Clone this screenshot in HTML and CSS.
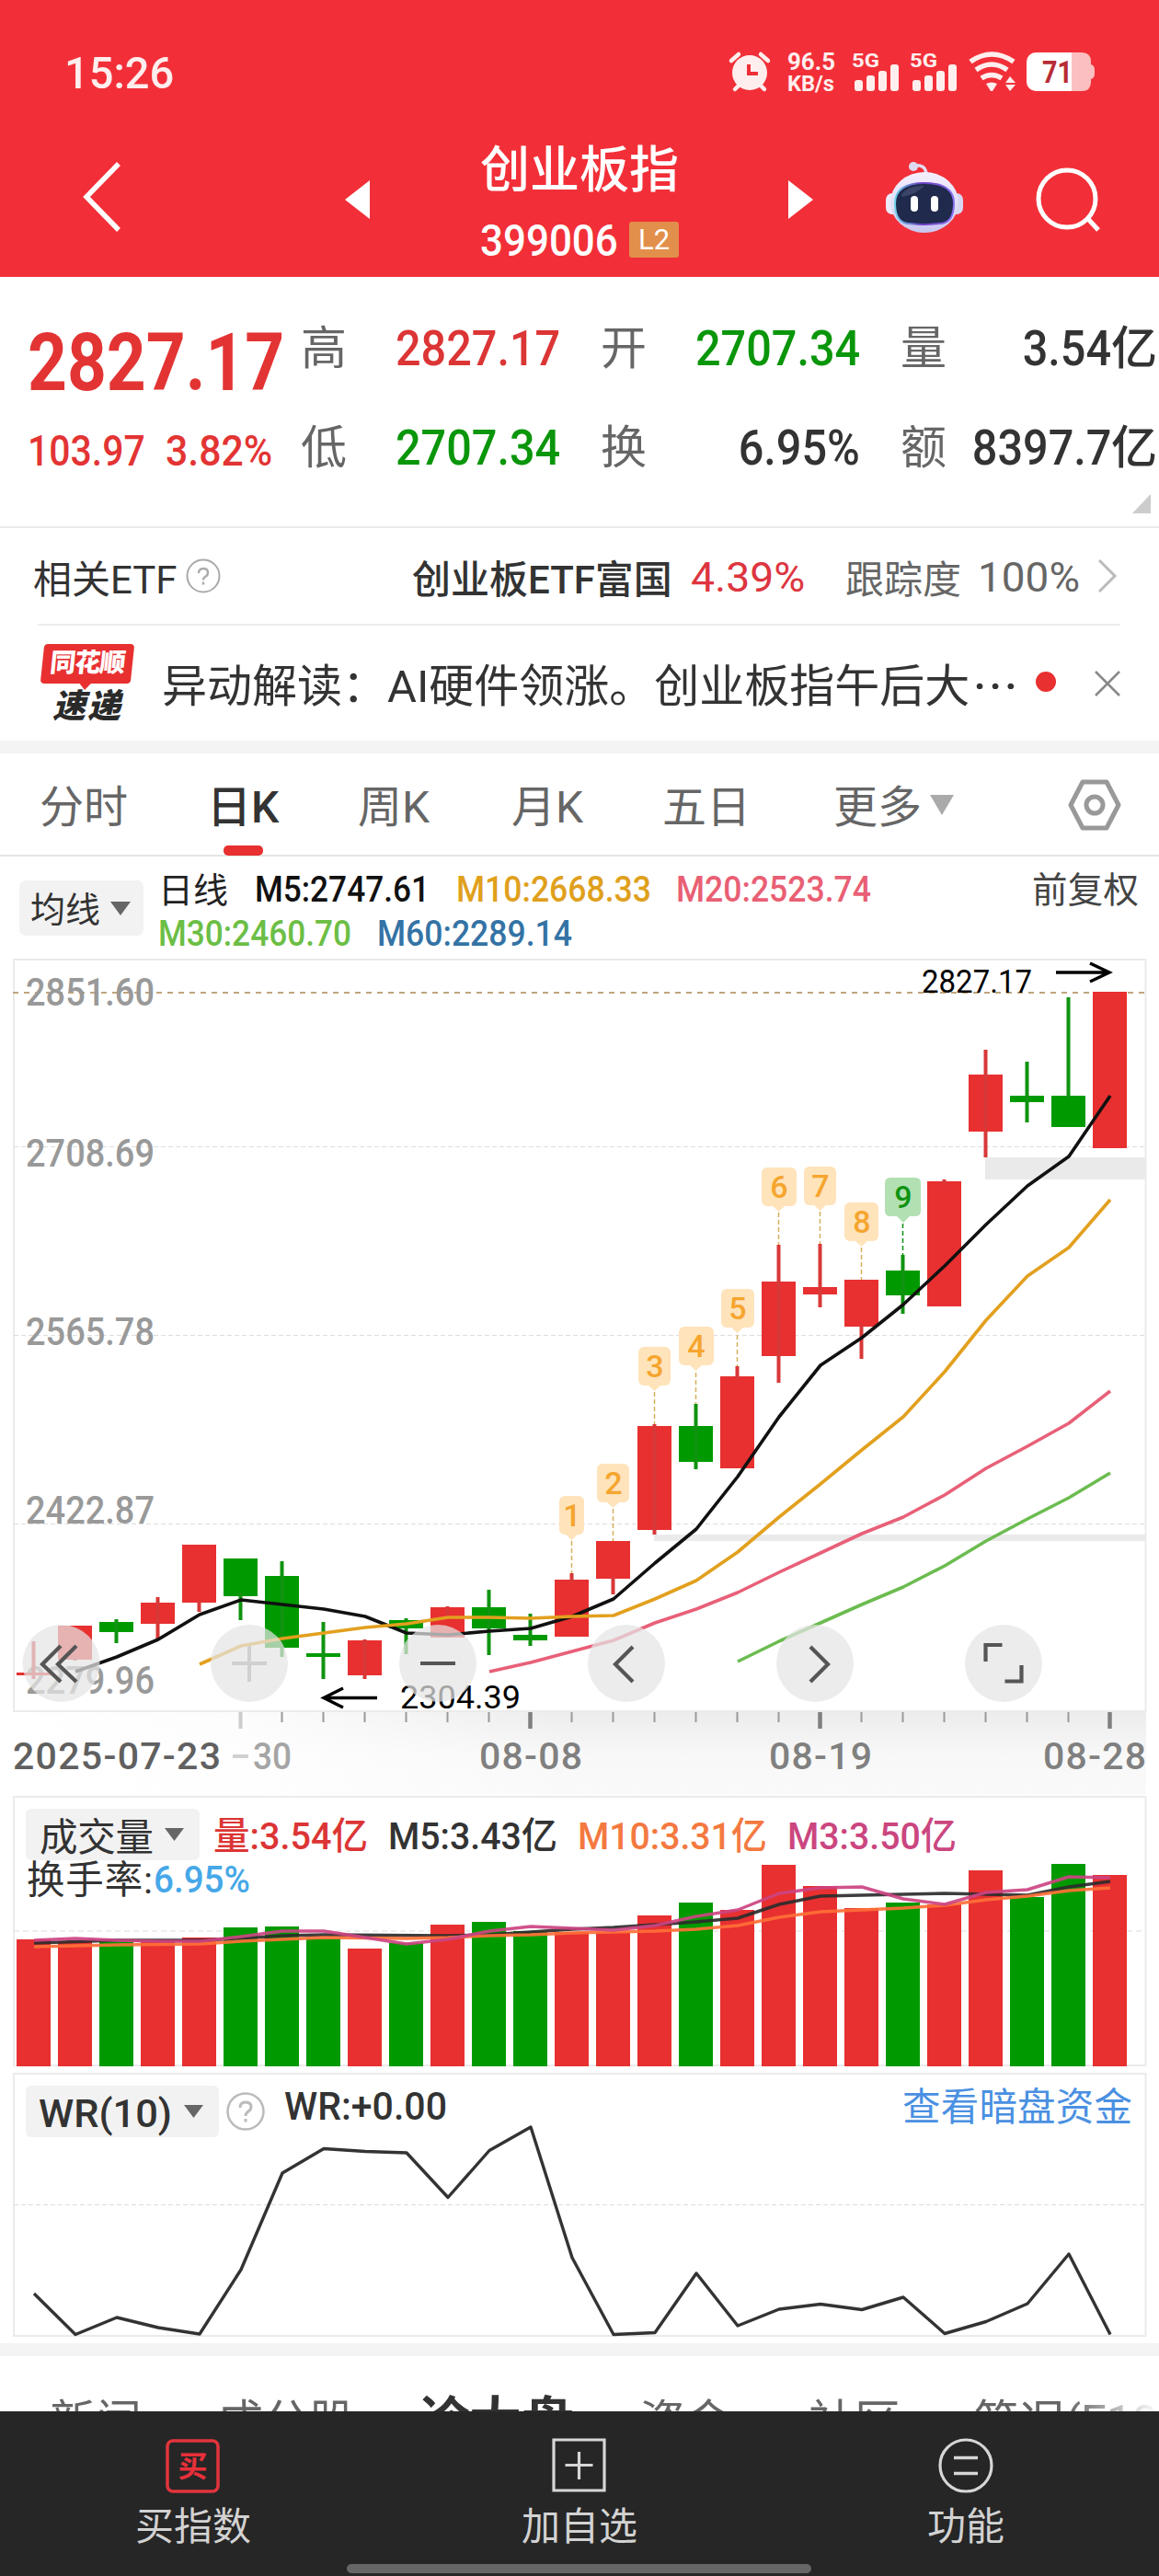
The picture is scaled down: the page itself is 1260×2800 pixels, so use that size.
FILE: index.html
```html
<!DOCTYPE html>
<html lang="zh-CN">
<head>
<meta charset="utf-8">
<title>创业板指 399006</title>
<link rel="stylesheet" href="styles.css">
</head>
<body>
<div class="app">
  <header class="header">
    <div class="status">
      <span class="clock num">15:26</span>
      <svg class="status-icons" width="430" height="60" viewBox="780 50 430 60">
        <g fill="#ffeeee">
          <circle cx="815" cy="79" r="19"/>
          <path d="M795 66l8-7M835 66l-8-7M799 97l5-5M831 97l-5-5" stroke="#ffeeee" stroke-width="4.5" stroke-linecap="round"/>
          <text class="tiny" x="856" y="76" font-size="25" textLength="52" lengthAdjust="spacingAndGlyphs">96.5</text>
          <text class="tiny" x="856" y="99" font-size="23" textLength="51" lengthAdjust="spacingAndGlyphs">KB/s</text>
          <text class="tiny" x="926" y="73" font-size="21" textLength="30" lengthAdjust="spacingAndGlyphs">5G</text>
          <text class="tiny" x="989" y="73" font-size="21" textLength="30" lengthAdjust="spacingAndGlyphs">5G</text>
          <rect x="929" y="87" width="9" height="12" rx="3"/><rect x="942" y="82" width="9" height="17" rx="3"/><rect x="955" y="77" width="9" height="22" rx="3"/><rect x="968" y="70" width="9" height="29" rx="3"/>
          <rect x="992" y="87" width="9" height="12" rx="3"/><rect x="1005" y="82" width="9" height="17" rx="3"/><rect x="1018" y="77" width="9" height="22" rx="3"/><rect x="1031" y="70" width="9" height="29" rx="3"/>
          <path d="M1072 91q6-3 12 0l-5 8h-2zM1093 90l5-7 6 7zM1093 92h11l-6 7z"/>
        </g>
        <path d="M814 70v10h10" fill="none" stroke="#f03038" stroke-width="4"/>
        <path d="M1055 67q23-16 47 0M1061 76q17-12 34 0M1067 85q11-7 22 0" fill="none" stroke="#ffeeee" stroke-width="5.5"/>
        <path d="M1165 57h11q10 0 10 10v3q4 1 4 6v4q0 5-4 6v3q0 10-10 10h-11z" fill="#fcbfc1"/>
        <rect x="1116" y="57" width="40" height="42" rx="10" fill="#fff"/><rect x="1135" y="57" width="30" height="42" fill="#fff"/>
        <text class="tiny" x="1133" y="90" font-size="33" fill="#b82c36" textLength="33" lengthAdjust="spacingAndGlyphs">71</text>
      </svg>
    </div>
    <nav class="nav">
      <svg class="back" width="46" height="84" viewBox="0 0 46 84"><path d="M42 5L7 41l35 36" fill="none" stroke="#fff" stroke-width="5.500"/></svg>
      <svg class="prev" width="28" height="42" viewBox="0 0 28 42"><path d="M27 0v42L0 21z" fill="#fff"/></svg>
      <div class="title">
        <h1>创业板指</h1>
        <div class="code"><span class="num">399006</span><b class="level">L2</b></div>
      </div>
      <svg class="next" width="28" height="42" viewBox="0 0 28 42"><path d="M0 0v42L27 21z" fill="#fff"/></svg>
      <svg class="robot" width="86" height="80" viewBox="0 0 86 80">
        <defs>
          <linearGradient id="shell" x2="0" y2="1"><stop offset="0" stop-color="#f5efff"/><stop offset=".6" stop-color="#dedbf5"/><stop offset="1" stop-color="#c9c6f0"/></linearGradient>
          <linearGradient id="rim"><stop offset="0" stop-color="#6fd0e8"/><stop offset=".45" stop-color="#6a3ec0"/><stop offset="1" stop-color="#8a6ff0"/></linearGradient>
        </defs>
        <path d="M31 6q13-2 14 9" fill="none" stroke="#e4daf2" stroke-width="3.5"/><circle cx="31" cy="7" r="5" fill="#dedbf0"/>
        <rect x="1" y="36" width="16" height="23" rx="7" fill="#eceafa"/><rect x="69" y="36" width="16" height="23" rx="7" fill="#d8d6f2"/>
        <ellipse cx="43" cy="46" rx="37" ry="33" fill="url(#shell)"/>
        <path d="M43 25q32 0 32 22t-16 22q-16 2-32 0-16 0-16-22t32-22z" fill="#1f2a4c" stroke="url(#rim)" stroke-width="2"/>
        <path d="M18 37q8-10 25-9-9 9-24 12z" fill="#3a4567"/>
        <rect x="28" y="39" width="8" height="17" rx="4" fill="#fff"/><rect x="50" y="39" width="8" height="17" rx="4" fill="#fff"/>
      </svg>
      <svg class="search" width="72" height="72" viewBox="0 0 72 72"><circle cx="35" cy="35" r="31" fill="none" stroke="#fff" stroke-width="5"/><path d="M57 56l12 13" stroke="#fff" stroke-width="5"/></svg>
    </nav>
  </header>

  <section class="quote">
    <div class="price-col">
      <span class="price num">2827.17</span>
      <div class="change"><span class="num">103.97</span><span class="num pct">3.82%</span></div>
    </div>
    <dl class="stats">
      <dt>高</dt><dd class="up"><span class="num">2827.17</span></dd>
      <dt>开</dt><dd class="down"><span class="num">2707.34</span></dd>
      <dt>量</dt><dd class="last"><span class="num">3.54</span><i>亿</i></dd>
      <dt>低</dt><dd class="down"><span class="num">2707.34</span></dd>
      <dt>换</dt><dd><span class="num">6.95%</span></dd>
      <dt>额</dt><dd class="last"><span class="num">8397.7</span><i>亿</i></dd>
    </dl>
    <svg class="expand" width="20" height="21" viewBox="0 0 20 21"><path d="M20 0v21H0z" fill="#ccc"/></svg>
  </section>

  <section class="etf">
    <span class="etf-label">相关ETF</span>
    <svg class="help" width="38" height="38" viewBox="0 0 38 38"><circle cx="19" cy="19" r="17.5" fill="none" stroke="#aaa" stroke-width="2"/><path d="M14 16q0-5 5-5t5 4.500q0 3-3 4.500-2 1-2 3.500M19 25.500v3" fill="none" stroke="#aaa" stroke-width="2.400"/></svg>
    <strong class="etf-name">创业板ETF富国</strong>
    <span class="etf-pct num">4.39%</span>
    <span class="track">跟踪度</span>
    <span class="track-val num">100%</span>
    <svg class="chev" width="24" height="40" viewBox="0 0 24 40"><path d="M3 3l17 17L3 37" fill="none" stroke="#bbb" stroke-width="3"/></svg>
  </section>

  <section class="news">
    <div class="brand">
      <span class="brand-top">同花顺</span>
      <span class="brand-bottom">速递</span>
    </div>
    <p class="headline">异动解读：AI硬件领涨。创业板指午后大<span class="dots">···</span></p>
    <i class="dot"></i>
    <svg class="close" width="30" height="30" viewBox="0 0 30 30"><path d="M2 2l26 26M28 2L2 28" stroke="#888" stroke-width="2.500"/></svg>
  </section>

  <div class="tabs">
    <span class="tab">分时</span>
    <span class="tab active">日K</span>
    <span class="tab">周K</span>
    <span class="tab">月K</span>
    <span class="tab">五日</span>
    <span class="tab more">更多<svg width="28" height="22" viewBox="0 0 28 22"><path d="M1 0h26L14 22z" fill="#aaa"/></svg></span>
    <svg class="hex" width="60" height="58" viewBox="0 0 60 58"><path d="M17 4h26l13 25-13 25H17L4 29z" fill="none" stroke="#999" stroke-width="5" stroke-linejoin="round"/><circle cx="30" cy="29" r="9" fill="none" stroke="#999" stroke-width="5"/></svg>
  </div>

  <section class="charts">
    <svg class="chart" width="1260" height="1020" viewBox="0 931 1260 1020">
      <defs>
        <linearGradient id="axisV" x2="0" y2="1"><stop offset="0" stop-color="#ececec"/><stop offset=".5" stop-color="#f8f8f8"/><stop offset="1" stop-color="#fafafa"/></linearGradient>
        <linearGradient id="axisH"><stop offset="0" stop-color="#fff"/><stop offset=".2" stop-color="#fff" stop-opacity=".85"/><stop offset=".5" stop-color="#fff" stop-opacity="0"/></linearGradient>
      </defs>
      <!-- moving-average legend -->
      <rect x="21" y="957" width="135" height="60" rx="7" fill="#f2f2f2"/>
      <text x="33" y="1002" font-size="38" fill="#333" textLength="76">均线</text>
      <path d="M120 980h22l-11 15z" fill="#666"/>
      <text x="172" y="981" font-size="38" fill="#222" textLength="76">日线</text>
      <g class="m" font-size="39.500">
        <text x="277" y="980" fill="#111" textLength="190" lengthAdjust="spacingAndGlyphs">M5:2747.61</text>
        <text x="496" y="980" fill="#e0a01c" textLength="212" lengthAdjust="spacingAndGlyphs">M10:2668.33</text>
        <text x="735" y="980" fill="#e95f74" textLength="212" lengthAdjust="spacingAndGlyphs">M20:2523.74</text>
        <text x="172" y="1028" fill="#6cbe45" textLength="210" lengthAdjust="spacingAndGlyphs">M30:2460.70</text>
        <text x="410" y="1028" fill="#3473a5" textLength="212" lengthAdjust="spacingAndGlyphs">M60:2289.14</text>
      </g>
      <text x="1122" y="981" font-size="38.500" fill="#444" textLength="116">前复权</text>

      <!-- time axis background -->
      <rect x="15" y="1861" width="1231" height="94" fill="url(#axisV)"/><rect x="15" y="1861" width="1231" height="94" fill="url(#axisH)"/>
      <rect x="15" y="1043" width="1230.500" height="817" fill="none" stroke="#ebebeb" stroke-width="2"/>
      <path d="M15 1246.500H1245M15 1451.500H1245M15 1656.500H1245" stroke="#ddd" stroke-width="1.200" stroke-dasharray="5 3"/>
      <path d="M1071 1258h175v24h-175zM711 1668h535v7H711z" fill="#eaeaea"/>
      <path d="M14 1079H1245" stroke="#bfa57c" stroke-width="2" stroke-dasharray="6 6"/>

      <g fill="#999" class="m" font-size="42">
        <text x="28" y="1093" textLength="140" lengthAdjust="spacingAndGlyphs">2851.60</text>
        <text x="28" y="1268" textLength="140" lengthAdjust="spacingAndGlyphs">2708.69</text>
        <text x="28" y="1462" textLength="140" lengthAdjust="spacingAndGlyphs">2565.78</text>
        <text x="28" y="1656" textLength="140" lengthAdjust="spacingAndGlyphs">2422.87</text>
        <text x="28" y="1841" textLength="140" lengthAdjust="spacingAndGlyphs">2279.96</text>
      </g>

      <!-- candles -->
      <path fill="#e83030" d="M18 1818h37v3h-37zM63 1767h37v37h-37zM153 1742h37v23h-37zM198 1679h37v63h-37zM378 1783h37v38h-37zM468 1747h37v33h-37zM603 1717h37v62h-37zM648 1675h37v41h-37zM693 1550h37v113h-37zM783 1496h37v100h-37zM828 1393h37v81h-37zM873 1399h37v8h-37zM918 1391h37v51h-37zM1008 1284h37v136h-37zM1053 1168h37v62h-37zM1188 1078h37v170h-37z"/>
      <path stroke="#d83838" stroke-width="4" d="M36.500 1784v41M81.500 1800v5M171.500 1736v45M216.500 1740v12M396.500 1782v43M486.500 1746v10M621.500 1710v10M666.500 1714v19M711.500 1548v120M801.500 1485v15M846.500 1353v150M891.500 1352v69M936.500 1440v37M1026.500 1282v6M1071.500 1141v117"/>
      <path fill="#009a00" d="M108 1763h37v11h-37zM243 1694h37v41h-37zM288 1713h37v78h-37zM333 1797h37v4h-37zM423 1761h37v9h-37zM513 1747h37v23h-37zM558 1777h37v6h-37zM738 1550h37v39h-37zM963 1381h37v27h-37zM1098 1191h37v7h-37zM1143 1191h37v34h-37z"/>
      <path stroke="#109310" stroke-width="4" d="M126.500 1760v26M261.500 1730v31M306.500 1697v104M351.500 1763v62M441.500 1759v39M531.500 1728v71M576.500 1754v35M756.500 1526v71M981.500 1364v64M1116.500 1154v66M1161.500 1084v110"/>

      <g fill="none" stroke-width="3.600" stroke-linejoin="round">
        <path stroke="#e86078" d="M532 1817 577 1807 622 1795 667 1783 712 1764 757 1749 802 1731 847 1709 892 1688 937 1667 982 1649 1027 1625 1072 1596 1117 1572 1162 1547 1207 1512"/>
        <path stroke="#6cbc50" d="M802 1806 847 1784 892 1764 937 1744 982 1725 1027 1702 1072 1675 1117 1651 1162 1628 1207 1601"/>
        <path stroke="#111" d="M82 1817 127 1801 172 1782 217 1755 262 1739 307 1744 352 1749 397 1757 442 1775 487 1777 532 1773 577 1770 622 1757 667 1738 712 1699 757 1662 802 1605 847 1540 892 1484 937 1454 982 1418 1027 1376 1072 1331 1117 1289 1162 1257 1207 1191"/>
        <path stroke="#e2a01e" d="M217 1809 262 1789 307 1781 352 1775 397 1769 442 1765 487 1758 532 1758 577 1759 622 1757 667 1756 712 1738 757 1718 802 1687 847 1649 892 1613 937 1576 982 1540 1027 1491 1072 1435 1117 1387 1162 1356 1207 1304"/>
      </g>

      <!-- nine-turn markers -->
      <path stroke="#d5b05c" stroke-width="1.500" stroke-dasharray="5 3" d="M621.500 1675v35M666.500 1640v35M711.500 1513v35M756.500 1492v34M801.500 1451v34M846.500 1318v35M891.500 1317v35M936.500 1356v35"/>
      <path stroke="#109310" stroke-width="1.500" stroke-dasharray="5 3" d="M981.500 1330v34"/>
      <g fill="#ffe3ba">
        <rect x="608" y="1626" width="27" height="42" rx="6"/><path d="M614 1667h15l-7.500 7z"/>
        <rect x="649" y="1591" width="35" height="42" rx="6"/><path d="M659 1632h15l-7.500 7z"/>
        <rect x="694" y="1464" width="35" height="42" rx="6"/><path d="M704 1505h15l-7.500 7z"/>
        <rect x="738" y="1442" width="38" height="42" rx="6"/><path d="M749 1483h15l-7.500 7z"/>
        <rect x="784" y="1401" width="36" height="42" rx="6"/><path d="M794 1442h15l-7.500 7z"/>
        <rect x="828" y="1269" width="38" height="42" rx="6"/><path d="M839 1310h15l-7.500 7z"/>
        <rect x="874" y="1268" width="35" height="42" rx="6"/><path d="M884 1309h15l-7.500 7z"/>
        <rect x="918" y="1307" width="37" height="42" rx="6"/><path d="M929 1348h15l-7.500 7z"/>
      </g>
      <path fill="#b3e0b3" d="M968 1280h27q6 0 6 6v30q0 6-6 6h-6l-7 7-7-7h-7q-6 0-6-6v-30q0-6 6-6z"/>
      <g class="m" font-size="34" fill="#f5a52e" text-anchor="middle">
        <text x="622" y="1659">1</text><text x="667" y="1624">2</text><text x="712" y="1497">3</text><text x="757" y="1475">4</text><text x="802" y="1434">5</text><text x="847" y="1302">6</text><text x="892" y="1301">7</text><text x="937" y="1340">8</text>
        <text x="982" y="1313" fill="#109310">9</text>
      </g>

      <g fill="#000" font-size="35.500">
        <text x="1002" y="1079" textLength="120" lengthAdjust="spacingAndGlyphs">2827.17</text>
        <text x="435" y="1857" textLength="131" lengthAdjust="spacingAndGlyphs">2304.39</text>
      </g>
      <path d="M1148 1057h56M1185 1047l21 10-21 10M410 1845.500h-56M373 1835l-21 10.500 21 10.500" fill="none" stroke="#000" stroke-width="3.400"/>

      <!-- floating chart controls -->
      <g fill="#e4e4e4" fill-opacity=".72">
        <circle cx="66.500" cy="1808" r="42"/><circle cx="271" cy="1808" r="42"/><circle cx="476" cy="1808" r="42"/><circle cx="681" cy="1808" r="42"/><circle cx="886" cy="1808" r="42"/><circle cx="1091" cy="1808" r="42"/>
      </g>
      <path d="M66 1789l-20 20 20 19M83 1789l-20 20 20 19M457 1808h38M688 1790l-19 19 19 19M881 1790l19 19-19 19M1071.500 1806v-18h18M1110.500 1810v17.500h-18" fill="none" stroke="#555" stroke-width="4.200"/>
      <path d="M252 1808h38M271 1789v39" stroke="#d0d0d0" stroke-width="4"/>

      <!-- time axis -->
      <path d="M306.500 1861v11M351.500 1861v11M396.500 1861v11M441.500 1861v11M486.500 1861v11M531.500 1861v11M621.500 1861v11M666.500 1861v11M711.500 1861v11M756.500 1861v11M801.500 1861v11M846.500 1861v11M936.500 1861v11M981.500 1861v11M1026.500 1861v11M1071.500 1861v11M1116.500 1861v11M1161.500 1861v11" stroke="#999" stroke-width="2"/>
      <path d="M576.500 1861v18M891.500 1861v18M1206.500 1861v18" stroke="#808080" stroke-width="4.500"/>
      <path d="M261.500 1861v18" stroke="#ccc" stroke-width="4"/>
      <g class="m" font-size="41" fill="#808080">
        <text x="14" y="1923" fill="#606060" textLength="226" lengthAdjust="spacing">2025-07-23</text>
        <text x="275" y="1923" fill="#a5a5a5" textLength="42" lengthAdjust="spacingAndGlyphs">30</text>
        <text x="521" y="1923" textLength="112">08-08</text>
        <text x="836" y="1923" textLength="112">08-19</text>
        <text x="1134" y="1923" textLength="112">08-28</text>
      </g>
      <path d="M253 1909h17" stroke="#d0d0d0" stroke-width="4"/>
    </svg>

    <svg class="chart" width="1260" height="300" viewBox="0 1951 1260 300">
      <rect x="15" y="1953" width="1230.500" height="292" fill="none" stroke="#ebebeb" stroke-width="2"/>
      <path d="M15 2099H1245" stroke="#e8e8e8" stroke-width="1.500" stroke-dasharray="6 4"/>
      <rect x="28" y="1966" width="189" height="56" rx="6" fill="#f2f2f2"/>
      <text x="43" y="2012" font-size="41.500" fill="#333" textLength="124">成交量</text>
      <path d="M179 1987h21l-10.500 14z" fill="#666"/>
      <g class="m" font-size="41">
        <text x="232" y="2010" fill="#dc3535" textLength="168" lengthAdjust="spacingAndGlyphs">量:3.54亿</text>
        <text x="422" y="2010" fill="#333" textLength="184" lengthAdjust="spacingAndGlyphs">M5:3.43亿</text>
        <text x="628" y="2010" fill="#f47940" textLength="206" lengthAdjust="spacingAndGlyphs">M10:3.31亿</text>
        <text x="856" y="2010" fill="#cb467f" textLength="184" lengthAdjust="spacingAndGlyphs">M3:3.50亿</text>
        <text x="167" y="2057" fill="#46a8e8" textLength="105" lengthAdjust="spacingAndGlyphs">6.95%</text>
      </g>
      <text x="29" y="2058" font-size="41.500" fill="#333" textLength="137">换手率:</text>
      <path fill="#e83030" d="M18 2108h37v138h-37zM63 2110h37v136h-37zM153 2110h37v136h-37zM198 2106h37v140h-37zM378 2118h37v128h-37zM468 2092h37v154h-37zM603 2100h37v146h-37zM648 2100h37v146h-37zM693 2082h37v164h-37zM783 2076h37v170h-37zM828 2027h37v219h-37zM873 2050h37v196h-37zM918 2074h37v172h-37zM1008 2070h37v176h-37zM1053 2033h37v213h-37zM1188 2038h37v208h-37z"/>
      <path fill="#009a00" d="M108 2111h37v135h-37zM243 2095h37v151h-37zM288 2094h37v152h-37zM333 2107h37v139h-37zM423 2112h37v134h-37zM513 2089h37v157h-37zM558 2099h37v147h-37zM738 2068h37v178h-37zM963 2068h37v178h-37zM1098 2062h37v184h-37zM1143 2026h37v220h-37z"/>
      <g fill="none" stroke-width="3.500" stroke-opacity=".92" stroke-linejoin="round">
        <path stroke="#2c2c2c" d="M37 2112 127 2109 217 2109 262 2107 307 2104 352 2103 487 2104 532 2103 577 2100 622 2097 667 2095 712 2092 757 2089 802 2085 847 2070 892 2061 937 2060 982 2059 1027 2058 1072 2059 1117 2060 1162 2051 1207 2045"/>
        <path stroke="#ff7038" d="M37 2116 127 2114 217 2113 262 2110 307 2108 352 2106 442 2107 487 2106 532 2104 577 2103 622 2101 667 2100 712 2099 757 2097 802 2093 847 2084 892 2078 937 2076 982 2074 1027 2071 1072 2065 1117 2061 1162 2055 1207 2052"/>
        <path stroke="#cc4482" d="M37 2109 82 2107 127 2109 172 2110 217 2110 262 2105 307 2099 352 2099 397 2106 442 2113 487 2108 532 2099 577 2094 622 2096 667 2098 712 2093 757 2083 802 2076 847 2058 892 2052 937 2051 982 2064 1027 2070 1072 2057 1117 2054 1162 2040 1207 2041"/>
      </g>
    </svg>

    <svg class="chart" width="1260" height="296" viewBox="0 2251 1260 296">
      <rect x="15" y="2254" width="1230.500" height="285" fill="none" stroke="#ebebeb" stroke-width="2"/>
      <path d="M15 2396.500H1245" stroke="#ddd" stroke-width="1.200" stroke-dasharray="5 3"/>
      <rect x="28" y="2267" width="210" height="56" rx="6" fill="#f2f2f2"/>
      <g class="m" font-size="42" fill="#333">
        <text x="42" y="2312" textLength="145" lengthAdjust="spacingAndGlyphs">WR(10)</text>
        <text x="309" y="2304" textLength="177" lengthAdjust="spacingAndGlyphs">WR:+0.00</text>
      </g>
      <path d="M200 2288h21l-10.500 14z" fill="#666"/>
      <circle cx="267" cy="2295" r="19.500" fill="none" stroke="#bbb" stroke-width="2.500"/>
      <path d="M261 2291q0-6 6-6t6 5q0 3-3 5-3 2-3 5M267 2303v3.500" fill="none" stroke="#bbb" stroke-width="3"/>
      <text x="981" y="2305" font-size="41.500" fill="#4a90e2" textLength="250">查看暗盘资金</text>
      <path fill="none" stroke="#333" stroke-width="3.400" stroke-linejoin="round" d="M37 2493 82 2537.500 127 2519 172 2530 217 2537 262 2467 307 2362 352 2335.500 397 2338.500 442 2340 487 2388.500 532 2337.500 577 2312 622 2454 667 2537.500 712 2535.500 757 2471 802 2528 847 2510 892 2504.500 937 2510.500 982 2497 1027 2536.500 1072 2523.500 1117 2504 1162 2450 1207 2537.500"/>
    </svg>
  </section>

  <div class="subtabs">
    <span>新闻</span><span>成分股</span><span class="on">诊大盘</span><span>资金</span><span>社区</span><span>简况(F10</span>
  </div>

  <footer class="bottom">
    <div class="action">
      <svg width="60" height="60" viewBox="0 0 60 60"><rect x="2" y="3" width="55" height="55" rx="6" fill="none" stroke="#e2343c" stroke-width="3.500"/><text x="13.500" y="42" font-size="32" font-weight="700" fill="#e8303a">买</text></svg>
      <span>买指数</span>
    </div>
    <div class="action">
      <svg width="60" height="60" viewBox="0 0 60 60"><path d="M2 2h55v55H2zM29.500 15v30M14.500 29.500h30" fill="none" stroke="#d6d6d6" stroke-width="3.200"/></svg>
      <span>加自选</span>
    </div>
    <div class="action">
      <svg width="60" height="60" viewBox="0 0 60 60"><path d="M17 21.500h26M17 38.500h26" stroke="#d6d6d6" stroke-width="3.500"/><circle cx="30" cy="30" r="28" fill="none" stroke="#d6d6d6" stroke-width="3.200"/></svg>
      <span>功能</span>
    </div>
    <i class="home"></i>
  </footer>
</div>
</body>
</html>
```
FILE: styles.css
```css
* { box-sizing: border-box; margin: 0; padding: 0; }
body {
  width: 1260px;
  background: #fff;
  color: #333;
  font-family: Roboto, "Noto Sans CJK SC", sans-serif;
}
i { font-style: normal; }
svg { display: block; flex: none; }
.app { width: 1260px; height: 2800px; overflow: hidden; display: flex; flex-direction: column; }
.app > * { flex: none; }
.num { display: inline-block; transform: scaleX(.9); transform-origin: 0 50%; white-space: nowrap; line-height: 1; font-weight: 500; }
.m { font-weight: 500; }
.tiny { font-weight: 700; }

/* header */
.header { height: 301px; background: #f22f38; color: #fff; }
.status { height: 150px; padding: 50px 50px 0 70px; display: flex; justify-content: space-between; }
.clock { font-size: 49px; line-height: 60px; color: #ffeeee; transform: scaleX(.96); }
.nav {
  height: 151px;
  display: grid;
  grid-template-columns: 288px 147px 335px 105px 163px 1fr;
  padding-left: 87px;
  align-items: start;
}
.back { margin-top: 23px; }
.prev, .next { margin-top: 46px; }
.title { height: 151px; }
.title h1 { font-size: 54px; line-height: 66px; font-weight: 500; padding-top: 3px; }
.code { display: flex; align-items: center; margin-top: 20px; height: 42px; }
.code .num { font-size: 48px; width: 162px; margin-top: 3px; transform: scaleX(.915); }
.level { width: 54px; height: 39px; border-radius: 3px; background: #e28f4b; font-size: 31px; line-height: 39px; font-weight: 400; text-align: center; }
.robot { margin-top: 24px; }
.search { margin-top: 31px; }

/* quote */
.quote { height: 273px; border-bottom: 2px solid #ebebeb; display: flex; padding-left: 30px; position: relative; }
.price-col { width: 297px; color: #e33434; }
.price { font-size: 87px; margin-top: 50px; font-weight: 700; transform: scaleX(.86); }
.change { display: flex; margin-top: 29px; font-size: 46px; }
.change .num { width: 155px; transform: scaleX(.89); }
.change .pct { transform: scaleX(.93); }
.stats { width: 933px; padding-top: 43px; display: grid; grid-template-columns: 50px 276px 50px 276px 50px 1fr; grid-template-rows: 108px 108px; }
.stats dt { font-size: 50px; line-height: 70px; color: #666; }
.stats dd { font-size: 54px; line-height: 70px; text-align: right; padding-right: 2px; }
.stats dd:not(.last) { padding-right: 44px; }
.stats .num { transform-origin: 100% 50%; }
.stats .last { display: flex; justify-content: flex-end; align-items: center; height: 70px; }
.stats .last i { font-size: 50px; font-weight: 500; }
.up { color: #dc3535; }
.down { color: #0a960a; }
.expand { position: absolute; right: 9px; bottom: 14px; }
.change .pct { margin-left: 3px; }

/* related ETF */
.etf { height: 106px; border-bottom: 2px solid #ededed; display: flex; align-items: center; font-size: 42px; padding-left: 36px; margin-right: 42px; border-image: linear-gradient(to right, transparent 42px, #ededed 42px) 1; }
.etf > * { flex: none; }
.etf-label { width: 158px; white-space: nowrap; }
.help { margin-left: 8px; }
.etf-name { margin-left: 208px; font-weight: 500; width: 281px; white-space: nowrap; }
.etf-pct { margin-left: 22px; font-size: 45px; color: #dd3540; width: 168px; font-weight: 400; transform: scaleX(1.03); margin-top: 2px; }
.track { color: #666; width: 144px; }
.track-val { color: #666; font-size: 45px; width: 129px; font-weight: 400; transform: scaleX(1.02); margin-top: 2px; }

/* news */
.news { height: 125px; display: flex; align-items: center; padding-left: 44px; }
.brand { width: 102px; display: flex; flex-direction: column; align-items: center; font-style: italic; font-weight: 900; line-height: 1; }
.brand-top { width: 98px; height: 43px; transform: skewX(-6deg); border-radius: 4px; background: #e83030; color: #fff; font-size: 28px; line-height: 41px; text-align: center; letter-spacing: -1px; font-style: normal; }
.brand-top::after { content: ""; display: block; width: 0; margin: 1px auto 0; border: 7px solid transparent; border-top: 8px solid #e83030; border-bottom: 0; }
.brand-bottom { margin-top: 7px; font-size: 36px; color: #2a2a2a; letter-spacing: 2px; }
.headline { margin: -3px 0 0 30px; width: 940px; font-size: 49px; white-space: nowrap; color: #333; }
.dots { font-family: Roboto, sans-serif; font-weight: 500; letter-spacing: 3px; margin-left: 4px; }
.dot { flex: none; width: 22px; height: 22px; border-radius: 50%; background: #e83030; margin-left: 10px; margin-top: -3px; }
.close { margin-left: 41px; }

/* period tabs */
.tabs { border-top: 14px solid #f4f4f4; border-bottom: 2px solid #e5e5e5; height: 126px; display: flex; align-items: center; padding-left: 43px; font-size: 48px; color: #666; }
.tab { flex: none; width: 164px; height: 110px; line-height: 118px; position: relative; white-space: nowrap; }
.tab:nth-child(1) { width: 182px; }
.tab:nth-child(3) { width: 167px; }
.tab:nth-child(5) { width: 186px; }
.tab.active { color: #333; font-weight: 500; }
.tab.active::after { content: ""; position: absolute; left: 18px; bottom: -1px; width: 43px; height: 11px; border-radius: 5px; background: #e83030; }
.tab.more { display: flex; align-items: center; gap: 8px; width: 254px; line-height: 70px; padding-top: 7px; }
.tab.more svg { margin-top: -6px; }
.hex { margin-top: 2px; }

.charts { height: 1616px; }

/* section tabs, scrolled under the bottom bar */
.subtabs { border-top: 14px solid #f4f4f4; height: 74px; overflow: hidden; position: relative; display: flex; padding-left: 54px; font-size: 50px; line-height: 70px; padding-top: 37px; color: #666; white-space: nowrap; }
.subtabs span { width: 184px; flex: none; }
.subtabs span:nth-child(1) { width: 182px; }
.subtabs .on { width: 243px; font-size: 57px; font-weight: 700; color: #333; margin-left: -1px; margin-right: -1px; }
.subtabs span:nth-child(2) { width: 218px; }
.subtabs span:nth-child(4) { width: 184px; }
.subtabs span:nth-child(5) { width: 179px; }
.subtabs::after { content: ""; position: absolute; right: 0; top: 0; width: 100px; height: 74px; background: linear-gradient(to right, rgba(255,255,255,0), #fff); }

/* bottom bar */
.bottom { height: 179px; background: #262626; display: grid; grid-template-columns: repeat(3, 420px); position: relative; color: #d2d2d2; font-size: 42px; }
.action { padding-top: 29px; display: flex; flex-direction: column; align-items: center; gap: 4px; line-height: 66px; }
.home { position: absolute; left: 377px; bottom: 3px; width: 505px; height: 10px; border-radius: 5px; background: #666; }
```
